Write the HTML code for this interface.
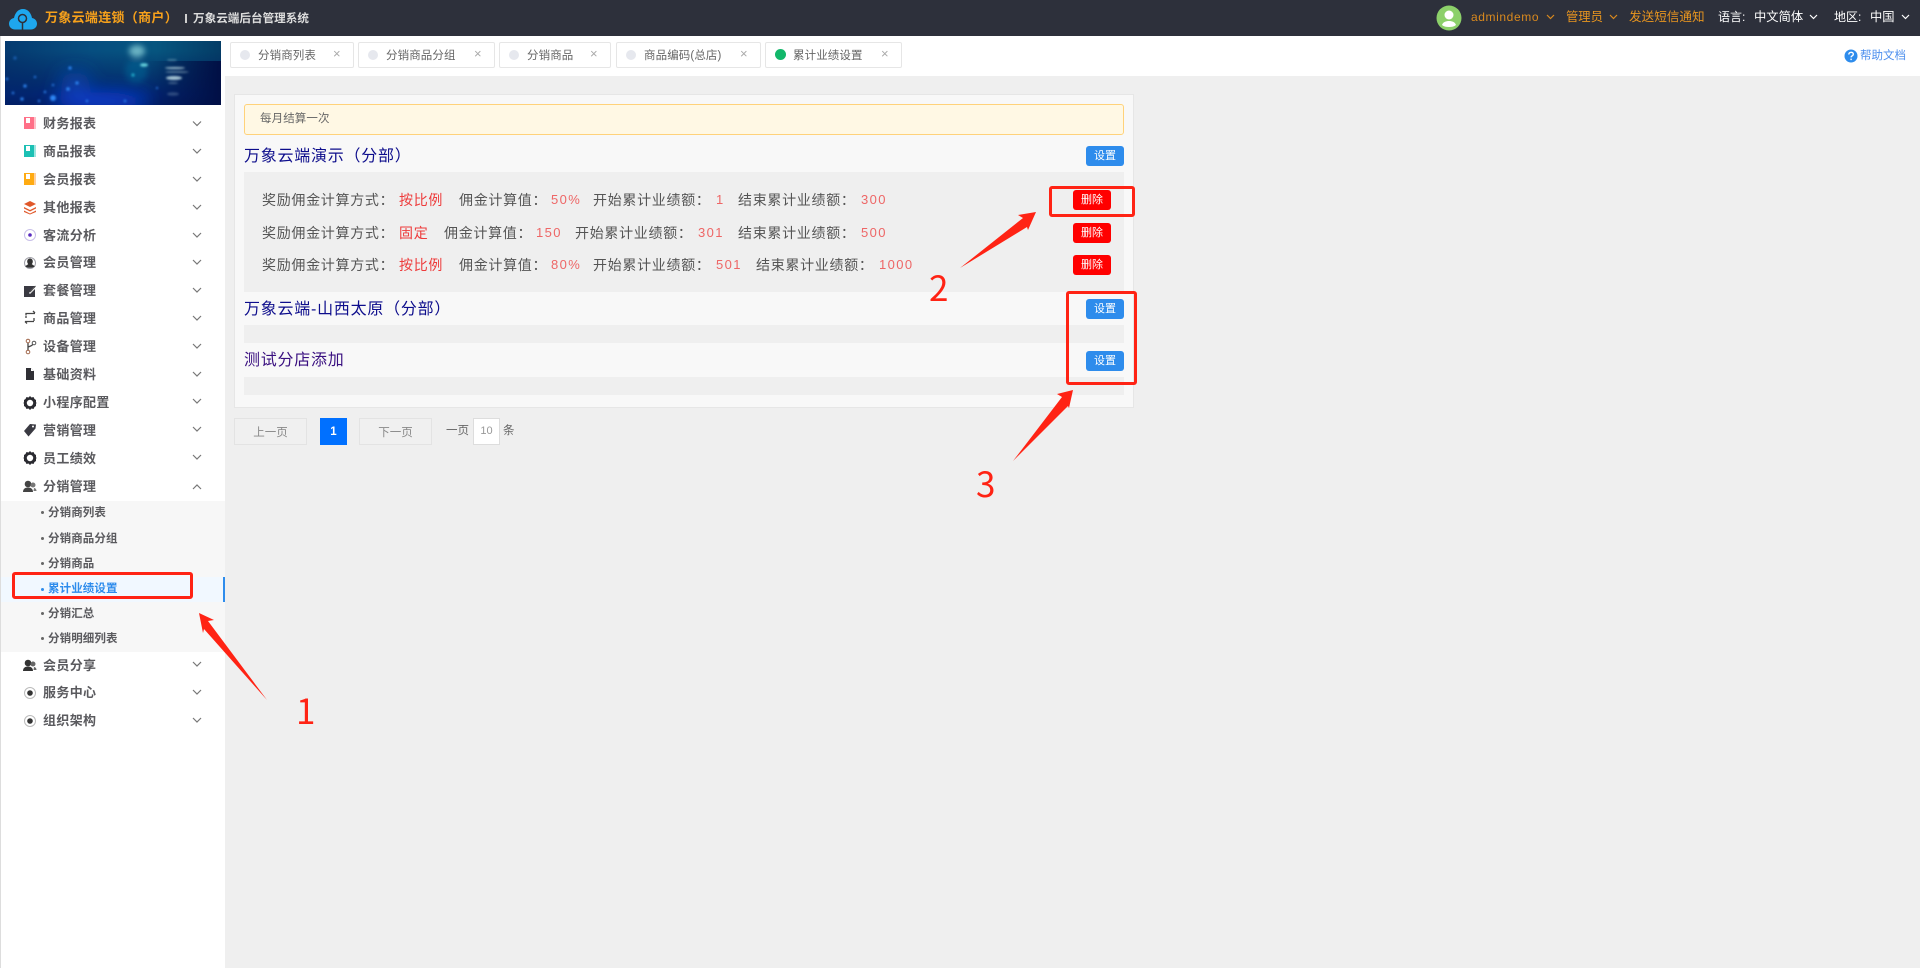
<!DOCTYPE html>
<html lang="zh-CN"><head><meta charset="utf-8"><title>累计业绩设置</title>
<style>
*{box-sizing:border-box}
html,body{margin:0;padding:0;width:1920px;height:968px;overflow:hidden;background:#efefef;font-family:"Liberation Sans","Noto Sans CJK SC",sans-serif}
.a{position:absolute}
.t{position:absolute;white-space:nowrap;line-height:20px;height:20px}
.hd{left:0;top:0;width:1920px;height:36px;background:#2d303b}
.side{left:0;top:36px;width:225px;height:932px;background:#fff;border-left:1px solid #ddd}
.m{color:#5a5a5e;font-size:13px;font-weight:700;letter-spacing:.35px;left:43px;margin-top:1px}
.s{color:#5a5a5e;font-size:11.5px;font-weight:700;left:48px;letter-spacing:.1px;margin-top:1px}
.dot{position:absolute;left:41px;width:3px;height:3px;border-radius:50%;background:#666}
.tab{position:absolute;top:42px;height:26px;background:#fff;border:1px solid #e6e6e6;border-radius:2px}
.tab i{position:absolute;left:9px;top:7px;width:10px;height:10px;border-radius:50%;background:#e6e8ee}
.tab b{position:absolute;left:27px;top:3px;line-height:20px;font-weight:400;font-size:11.5px;color:#666;white-space:nowrap;letter-spacing:.1px}
.tab u{position:absolute;top:1px;text-decoration:none;line-height:20px;font-size:13px;color:#aaa}
.r{font-size:14px;letter-spacing:.7px;color:#555;margin-top:1px}
.d{font-size:13px;letter-spacing:1.4px}
.v{color:#ee6666}
.red{color:#ee3b3b}
.btn{position:absolute;width:38px;height:20px;border-radius:3px;color:#fff;font-size:11px;text-align:center;line-height:21px}
.bl{background:#2e8cec;left:1086px}
.dl{background:#ff0000;left:1073px}
.ti{font-size:16px;left:244px;color:#0d0d8c;letter-spacing:.75px;margin-top:1px}
.pg{position:absolute;top:418px;height:27px;width:73px;background:#f0f0f0;border:1px solid #e3e3e3;color:#888;font-size:11.5px;text-align:center;line-height:28px}
.box{position:absolute;border:3px solid #ff2314;border-radius:3px}
.num{position:absolute;color:#ff2314;font-size:35px;line-height:40px;height:40px;font-family:"Noto Sans CJK SC",sans-serif;font-weight:400}
</style></head><body>
<div class="a hd"></div>
<svg class="a" style="left:8px;top:8px" width="30" height="23" viewBox="0 0 30 23"><path d="M7 21.500C3.500 21.500 1 19 1 15.800c0-3 2-5.300 5-5.800C7 5 10 1 15 1s8 4 9 9c3 .5 5 2.800 5 5.800 0 3.200-2.500 5.700-6 5.700z" fill="#1ea7ee"/><circle cx="14.500" cy="10.500" r="4" fill="none" stroke="#2d303b" stroke-width="1.500"/><path d="M14.500 14.500v7" stroke="#2d303b" stroke-width="1.500"/></svg>
<div class="t" style="left:45px;top:8px;color:#f7a11b;font-size:13px;font-weight:700;letter-spacing:.3px">万象云端连锁（商户）</div>
<div class="a" style="left:185px;top:14px;width:2px;height:9px;background:#cfcfcf"></div>
<div class="t" style="left:193px;top:9px;color:#ddd;font-size:11.600px;font-weight:700">万象云端后台管理系统</div>
<svg class="a" style="left:1436px;top:5px" width="26" height="26" viewBox="0 0 26 26"><circle cx="13" cy="13" r="12.500" fill="#8cd06a"/><circle cx="13" cy="10" r="4.500" fill="#fff"/><path d="M6 20c1-3 4-4 7-4s6 1 7 4c-2 1.500-4 2-7 2s-5-.5-7-2z" fill="#fff"/></svg>
<div class="t" style="left:1471px;top:7px;color:#d9891e;font-size:12px;letter-spacing:.6px">admindemo</div>
<div class="t" style="left:1566px;top:7px;color:#e8951f;font-size:12.300px">管理员</div>
<div class="t" style="left:1629px;top:7px;color:#e8951f;font-size:12.600px">发送短信通知</div>
<div class="t" style="left:1718px;top:7px;color:#fff;font-size:12px">语言:</div>
<div class="t" style="left:1754px;top:7px;color:#fff;font-size:12.300px">中文简体</div>
<div class="t" style="left:1834px;top:7px;color:#fff;font-size:12px">地区:</div>
<div class="t" style="left:1870px;top:7px;color:#fff;font-size:12.300px">中国</div>
<svg class="a" style="left:0;top:0" width="1920" height="36" fill="none"><g stroke="#d9891e" stroke-width="1.200"><path d="M1547 15l3.500 3.500 3.500-3.500M1610 15l3.500 3.500 3.500-3.500"/></g><path d="M1810 15l3.500 3.500 3.500-3.500M1902 15l3.500 3.500 3.500-3.500" stroke="#fff" stroke-width="1.200"/></svg>

<div class="a side"></div>
<svg class="a" style="left:5px;top:41px" width="216" height="64" viewBox="0 0 216 64">
<defs>
<linearGradient id="b0" x1="0" y1="0" x2="1" y2="0"><stop offset="0" stop-color="#053a70"/><stop offset=".4" stop-color="#064e80"/><stop offset=".7" stop-color="#06557f"/><stop offset="1" stop-color="#043c66"/></linearGradient>
<linearGradient id="b1" x1="0" y1="0" x2="0" y2="1"><stop offset="0" stop-color="#02205c" stop-opacity="0"/><stop offset=".8" stop-color="#02256f"/><stop offset="1" stop-color="#021f66"/></linearGradient>
<linearGradient id="b2" x1="0" y1="0" x2="1" y2="0"><stop offset=".65" stop-color="#010f45" stop-opacity="0"/><stop offset="1" stop-color="#010f45"/></linearGradient>
<filter id="f3" x="-50%" y="-80%" width="200%" height="260%"><feGaussianBlur stdDeviation="9"/></filter>
<filter id="f2" x="-80%" y="-80%" width="260%" height="260%"><feGaussianBlur stdDeviation="3"/></filter>
<filter id="f1" x="-20%" y="-50%" width="140%" height="200%"><feGaussianBlur stdDeviation="1"/></filter>
</defs>
<rect width="216" height="64" fill="url(#b0)"/>
<rect y="10" width="216" height="54" fill="url(#b1)"/>
<rect y="20" width="216" height="44" fill="url(#b2)"/>
<g filter="url(#f3)"><ellipse cx="95" cy="60" rx="50" ry="9" fill="#0a40d8"/><ellipse cx="70" cy="40" rx="16" ry="9" fill="#0a48b8" opacity=".8"/></g>
<g filter="url(#f2)"><ellipse cx="132" cy="10" rx="8" ry="6" fill="#7cc4d0" opacity=".85"/><ellipse cx="131" cy="30" rx="11" ry="12" fill="#0a6a9c" opacity=".45"/></g>
<g filter="url(#f1)" fill="#cdebf0">
<ellipse cx="139" cy="24" rx="4" ry="1.700" fill="#6fdde4" opacity=".9"/>
<ellipse cx="170" cy="27" rx="10" ry="1" opacity=".75"/><ellipse cx="172" cy="31" rx="12" ry=".8" opacity=".5"/>
<ellipse cx="169" cy="37" rx="8" ry="2" opacity=".8"/><ellipse cx="167" cy="19" rx="5" ry=".8" opacity=".4"/>
<ellipse cx="168" cy="53" rx="6" ry="1.800" opacity=".22"/><ellipse cx="168" cy="42" rx="5" ry=".9" opacity=".35"/>
</g>
<g filter="url(#f1)" fill="#2f86f4">
<circle cx="48" cy="57" r="3"/><circle cx="63" cy="48" r="1.800"/><circle cx="65" cy="27" r="1.600"/><circle cx="20" cy="45" r="1.600"/><circle cx="10" cy="17" r="1.600" opacity=".5"/><circle cx="72" cy="42" r="1.600"/><circle cx="40" cy="51" r="1.200"/><circle cx="17" cy="58" r="1.600"/><circle cx="2" cy="38" r="1.200"/><circle cx="152" cy="47" r="1"/><circle cx="128" cy="34" r="1.600" fill="#22a8c8"/><circle cx="30" cy="36" r="1.100"/><circle cx="48" cy="44" r="1.100"/><circle cx="8" cy="52" r="1.200"/><circle cx="34" cy="60" r="1.200"/><circle cx="82" cy="60" r="1.200"/><circle cx="120" cy="60" r="1.200"/>
</g>
</svg>

<!-- sidebar icons -->
<svg class="a" style="left:0;top:0" width="60" height="740">
<g><rect x="24" y="117" width="12" height="12" fill="#ff7088"/><rect x="26" y="118" width="4" height="5" fill="#fff"/><rect x="34" y="117" width="2" height="12" fill="#ffc0c8"/></g>
<g><rect x="24" y="145" width="12" height="12" fill="#1cc0b4"/><rect x="26" y="146" width="4" height="5" fill="#fff"/><rect x="34" y="145" width="2" height="12" fill="#a0e5e0"/></g>
<g><rect x="24" y="173" width="12" height="12" fill="#ffab12"/><rect x="26" y="174" width="4" height="5" fill="#fff"/><rect x="34" y="173" width="2" height="12" fill="#ffd0a0"/></g>
<g fill="#e0582a"><path d="M30 201l6 3-6 3-6-3z"/><path d="M24 207l6 3 6-3v1.500l-6 3-6-3z"/><path d="M24 210.500l6 3 6-3v1.500l-6 2.500-6-2.500z"/></g>
<circle cx="30" cy="235" r="5.500" fill="none" stroke="#c8bfe8"/><circle cx="30" cy="235" r="1.800" fill="#5a2bc0"/>
<circle cx="30" cy="263" r="5.500" fill="#fff" stroke="#a0a0a8"/><path d="M30 258.500c1.800 0 2.800 1.300 2.800 3 0 1.200-.5 2-1 2.600l3 2.200c-1 .9-2.500 1.500-4.800 1.500s-3.800-.6-4.800-1.500l3-2.200c-.5-.6-1-1.400-1-2.600 0-1.700 1-3 2.800-3z" fill="#333"/>
<rect x="24" y="286" width="11" height="11" fill="#3a3a42"/><path d="M29 293l5-6 1.500 1.500-5.500 5.500z" fill="#fff"/><path d="M30 292l5.500-6" stroke="#555" stroke-width="1.200"/>
<path d="M26 315.500v-2h9M35 313l-2-2M34 321.500h-9M25 321.500l2 2M26 318v-2M34 321v-3" fill="none" stroke="#444" stroke-width="1.300"/>
<path d="M28 341v10M34 341c0 4-3 5-6 6" fill="none" stroke="#444" stroke-width="1.300"/><circle cx="28" cy="341" r="1.800" fill="#fff" stroke="#a0664a"/><circle cx="28" cy="352" r="1.800" fill="#fff" stroke="#a0664a"/><circle cx="34" cy="343" r="1.800" fill="#fff" stroke="#555"/>
<path d="M26 368h5l3 3v9h-8z" fill="#2f2f35"/><path d="M31 368v3h3" fill="#fff"/>
<path d="M30 396l1.500 1.500 2-.5 1 2 1.500 1v2l.5 1-.5 1v2l-1.500 1-1 2-2-.5L30 410l-1.500-1.500-2 .5-1-2-1.500-1v-2l-.5-1 .5-1v-2l1.500-1 1-2 2 .5z" fill="#2a2a30"/><circle cx="30" cy="403" r="3.200" fill="#fff"/>
<path d="M24 431l6-7 6 .5-.5 4-7 8z" fill="#3a3a42"/><circle cx="33" cy="426.500" r="1" fill="#fff"/>
<path d="M30 451l1.500 1.500 2-.5 1 2 1.500 1v2l.5 1-.5 1v2l-1.500 1-1 2-2-.5L30 465l-1.500-1.500-2 .5-1-2-1.500-1v-2l-.5-1 .5-1v-2l1.500-1 1-2 2 .5z" fill="#2a2a30"/><circle cx="30" cy="458" r="3.200" fill="#fff"/>
<g><circle cx="28" cy="484" r="3.300" fill="#444"/><path d="M23 492c0-3 2-4.500 5-4.500s5 1.500 5 4.500z" fill="#444"/><circle cx="33" cy="485" r="2.500" fill="#777"/><path d="M34 488c1.500 0 2.500 1.500 2.500 3h-3z" fill="#777"/></g>
<g><circle cx="28" cy="663" r="3.300" fill="#333"/><path d="M23 671c0-3 2-4.500 5-4.500s5 1.500 5 4.500z" fill="#333"/><circle cx="33" cy="664" r="2.500" fill="#666"/><path d="M34 667c1.500 0 2.500 1.500 2.500 3h-3z" fill="#666"/></g>
<circle cx="30" cy="693" r="5.500" fill="#fff" stroke="#bbb"/><circle cx="30" cy="693" r="2.800" fill="#333"/>
<circle cx="30" cy="721" r="5.500" fill="#fff" stroke="#bbb"/><circle cx="30" cy="721" r="2.800" fill="#333"/>
</svg>

<div class="t m" style="top:113px">财务报表</div>
<div class="t m" style="top:141px">商品报表</div>
<div class="t m" style="top:169px">会员报表</div>
<div class="t m" style="top:197px">其他报表</div>
<div class="t m" style="top:225px">客流分析</div>
<div class="t m" style="top:252px">会员管理</div>
<div class="t m" style="top:280px">套餐管理</div>
<div class="t m" style="top:308px">商品管理</div>
<div class="t m" style="top:336px">设备管理</div>
<div class="t m" style="top:364px">基础资料</div>
<div class="t m" style="top:392px">小程序配置</div>
<div class="t m" style="top:420px">营销管理</div>
<div class="t m" style="top:448px">员工绩效</div>
<div class="t m" style="top:476px">分销管理</div>

<div class="a" style="left:1px;top:501px;width:224px;height:151px;background:#f7f7f7"></div>
<div class="a" style="left:1px;top:577px;width:224px;height:25px;background:#f1f8ff"></div>
<div class="a" style="left:223px;top:577px;width:2px;height:25px;background:#2e8cec"></div>
<div class="dot" style="top:511px"></div><div class="t s" style="top:502px">分销商列表</div>
<div class="dot" style="top:537px"></div><div class="t s" style="top:528px">分销商品分组</div>
<div class="dot" style="top:562px"></div><div class="t s" style="top:553px">分销商品</div>
<div class="dot" style="top:588px;background:#2e8cec"></div><div class="t s" style="top:578px;color:#2e8cec">累计业绩设置</div>
<div class="dot" style="top:612px"></div><div class="t s" style="top:603px">分销汇总</div>
<div class="dot" style="top:637px"></div><div class="t s" style="top:628px">分销明细列表</div>

<div class="t m" style="top:655px">会员分享</div>
<div class="t m" style="top:682px">服务中心</div>
<div class="t m" style="top:710px">组织架构</div>

<svg class="a" style="left:190px;top:110px" width="16" height="620" fill="none" stroke="#777" stroke-width="1.200">
<path d="M3 11.500l4 4 4-4M3 39l4 4 4-4M3 67l4 4 4-4M3 95l4 4 4-4M3 123l4 4 4-4M3 150l4 4 4-4M3 178l4 4 4-4M3 206l4 4 4-4M3 234l4 4 4-4M3 262l4 4 4-4M3 289l4 4 4-4M3 317l4 4 4-4M3 345l4 4 4-4M3 379l4-4 4 4M3 552l4 4 4-4M3 580l4 4 4-4M3 608l4 4 4-4"/></svg>

<!-- tabs bar -->
<div class="a" style="left:225px;top:36px;width:1695px;height:40px;background:#fff"></div>
<div class="tab" style="left:230px;width:124px"><i></i><b>分销商列表</b><u style="left:102px">×</u></div>
<div class="tab" style="left:358px;width:137px"><i></i><b>分销商品分组</b><u style="left:115px">×</u></div>
<div class="tab" style="left:499px;width:112px"><i></i><b>分销商品</b><u style="left:90px">×</u></div>
<div class="tab" style="left:616px;width:145px"><i></i><b>商品编码(总店)</b><u style="left:123px">×</u></div>
<div class="tab" style="left:765px;width:137px"><i style="background:#12b76a;width:11px;height:11px;left:9px;top:6px"></i><b>累计业绩设置</b><u style="left:115px">×</u></div>
<svg class="a" style="left:1844px;top:49px" width="14" height="14"><circle cx="7" cy="7" r="6.500" fill="#2e8cec"/><path d="M4.800 5.500c0-1.400 1-2.200 2.300-2.200s2.200.8 2.200 1.900c0 1.600-2.200 1.700-2.200 3.200" fill="none" stroke="#fff" stroke-width="1.400"/><rect x="6.400" y="9.600" width="1.400" height="1.500" fill="#fff"/></svg>
<div class="t" style="left:1860px;top:46px;font-size:11.500px;color:#4d8fee">帮助文档</div>

<!-- panel -->
<div class="a" style="left:234px;top:94px;width:900px;height:314px;background:#f8f8f8;border:1px solid #e6e6e6"></div>
<div class="a" style="left:244px;top:104px;width:880px;height:31px;background:#fff8e4;border:1px solid #ffd27a;border-radius:3px"></div>
<div class="t" style="left:260px;top:109px;font-size:11.500px;color:#666;letter-spacing:.1px">每月结算一次</div>

<div class="t ti" style="top:146px">万象云端演示（分部）</div>
<div class="btn bl" style="top:146px">设置</div>
<div class="a" style="left:244px;top:172px;width:880px;height:120px;background:#efefef"></div>

<div class="t r" style="left:262px;top:189px">奖励佣金计算方式：</div><div class="t r red" style="left:399px;top:189px">按比例</div>
<div class="t r" style="left:459px;top:189px">佣金计算值：</div><div class="t r d v" style="left:551px;top:189px">50%</div>
<div class="t r" style="left:593px;top:189px">开始累计业绩额：</div><div class="t r d v" style="left:716px;top:189px">1</div>
<div class="t r" style="left:738px;top:189px">结束累计业绩额：</div><div class="t r d v" style="left:861px;top:189px">300</div>

<div class="t r" style="left:262px;top:222px">奖励佣金计算方式：</div><div class="t r red" style="left:399px;top:222px">固定</div>
<div class="t r" style="left:444px;top:222px">佣金计算值：</div><div class="t r d v" style="left:536px;top:222px">150</div>
<div class="t r" style="left:575px;top:222px">开始累计业绩额：</div><div class="t r d v" style="left:698px;top:222px">301</div>
<div class="t r" style="left:738px;top:222px">结束累计业绩额：</div><div class="t r d v" style="left:861px;top:222px">500</div>

<div class="t r" style="left:262px;top:254px">奖励佣金计算方式：</div><div class="t r red" style="left:399px;top:254px">按比例</div>
<div class="t r" style="left:459px;top:254px">佣金计算值：</div><div class="t r d v" style="left:551px;top:254px">80%</div>
<div class="t r" style="left:593px;top:254px">开始累计业绩额：</div><div class="t r d v" style="left:716px;top:254px">501</div>
<div class="t r" style="left:756px;top:254px">结束累计业绩额：</div><div class="t r d v" style="left:879px;top:254px">1000</div>

<div class="btn dl" style="top:190px">删除</div>
<div class="btn dl" style="top:223px">删除</div>
<div class="btn dl" style="top:255px">删除</div>

<div class="t ti" style="top:299px">万象云端-山西太原（分部）</div>
<div class="btn bl" style="top:299px">设置</div>
<div class="a" style="left:244px;top:325px;width:880px;height:18px;background:#efefef"></div>
<div class="t ti" style="top:350px;color:#3a1080">测试分店添加</div>
<div class="btn bl" style="top:351px">设置</div>
<div class="a" style="left:244px;top:377px;width:880px;height:18px;background:#efefef"></div>

<!-- pagination -->
<div class="pg" style="left:234px">上一页</div>
<div class="a" style="left:320px;top:418px;width:27px;height:27px;background:#0070ff;color:#fff;font-size:11.500px;font-weight:700;text-align:center;line-height:29px">1</div>
<div class="pg" style="left:359px">下一页</div>
<div class="t" style="left:446px;top:421px;font-size:11.500px;color:#666">一页</div>
<div class="a" style="left:473px;top:418px;width:27px;height:27px;background:#fff;border:1px solid #ddd;color:#999;font-size:11px;text-align:center;line-height:25px">10</div>
<div class="t" style="left:503px;top:421px;font-size:11.500px;color:#666">条</div>

<!-- annotations -->
<div class="box" style="left:12px;top:572px;width:181px;height:27px"></div>
<div class="box" style="left:1049px;top:186px;width:86px;height:31px"></div>
<div class="box" style="left:1066px;top:291px;width:71px;height:94px"></div>
<svg class="a" style="left:0;top:0" width="1920" height="968" fill="#ff2314">
<path d="M199 613l15 7-6 1 59 79-63-71-1 4z"/>
<path d="M1036 212l-18 3 5 3-63 50 67-41 1 3z"/>
<path d="M1073 390l-16 4 5 3-49 64 55-55 1 2z"/>
</svg>
<div class="num" style="left:296px;top:690px">1</div>
<div class="num" style="left:929px;top:267px">2</div>
<div class="num" style="left:976px;top:463px">3</div>
</body></html>
